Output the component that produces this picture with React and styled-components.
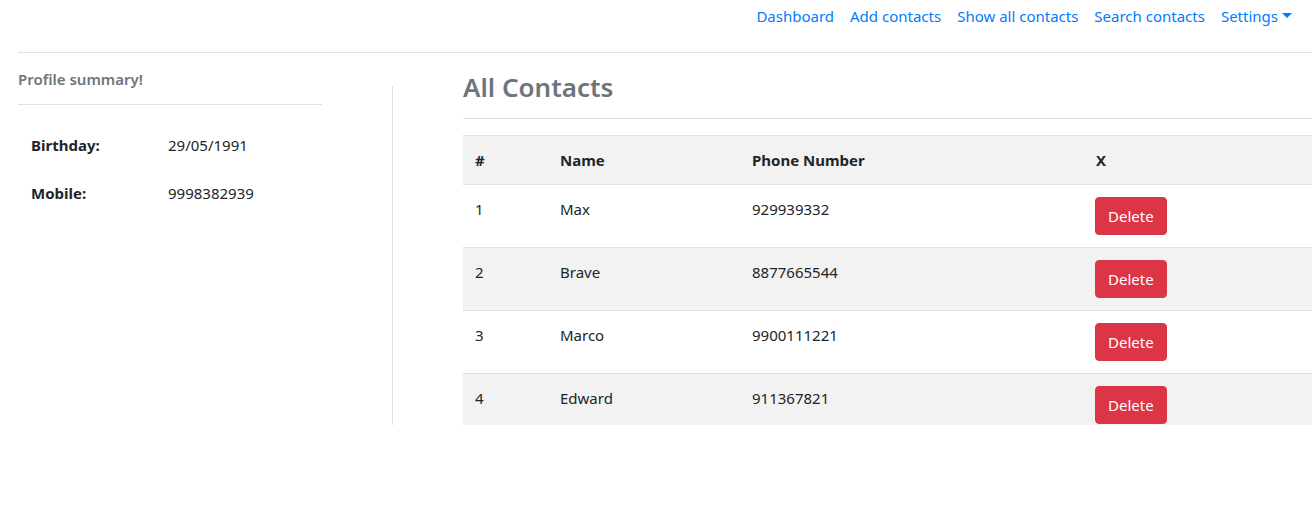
import React from "react";
import styled, { createGlobalStyle } from "styled-components";

const Global = createGlobalStyle`
  html, body { margin: 0; padding: 0; background: #fff; }
  body {
    font-family: "Noto Sans", "Open Sans", sans-serif;
    font-size: 15px;
    line-height: 24px;
    color: #212529;
  }
  * { box-sizing: border-box; }
`;

const Page = styled.div`
  width: 1312px;
  height: 507px;
  overflow: hidden;
  padding-left: 18px;
`;

const Nav = styled.nav`
  display: flex;
  justify-content: flex-end;
  align-items: flex-start;
  height: 53px;
  padding: 4px 12px 0 0;
  border-bottom: 1px solid #dee2e6;
`;

const NavLink = styled.a`
  color: #007bff;
  text-decoration: none;
  padding: 0 8px;
  display: inline-flex;
  align-items: center;
  line-height: 24px;
`;

const Caret = styled.span`
  display: inline-block;
  margin-left: 4px;
  width: 0;
  height: 0;
  border-left: 5px solid transparent;
  border-right: 5px solid transparent;
  border-top: 5px solid #007bff;
  transform: translateY(-1px);
`;

const Main = styled.div`
  display: flex;
  height: 372px;
  overflow: hidden;
`;

const Side = styled.aside`
  width: 374px;
  flex: none;
`;

const SideTitle = styled.div`
  color: #6c757d;
  font-weight: 600;
  font-size: 15px;
  line-height: 24px;
  margin-top: 14px;
`;

const SideRule = styled.div`
  width: 304px;
  border-top: 1px solid #dee2e6;
  margin-top: 13px;
`;

const InfoTable = styled.table`
  border-collapse: collapse;
  margin-top: 16px;
  td {
    padding: 12px 12px 12px 13px;
    vertical-align: top;
    line-height: 24px;
  }
  td:first-child { width: 138px; font-weight: 700; }
  td:last-child { padding-left: 12px; }
`;

const Divider = styled.div`
  width: 1px;
  flex: none;
  margin-top: 33px;
  background: #dee2e6;
`;

const Content = styled.section`
  flex: none;
  width: 900px;
  margin-left: 70px;
`;

const Heading = styled.h2`
  margin: 0;
  padding-top: 16px;
  font-size: 26px;
  line-height: 36px;
  font-weight: 600;
  color: #6c757d;
`;

const Rule = styled.div`
  border-top: 1px solid #dee2e6;
  margin-top: 13px;
`;

const Table = styled.table`
  width: 100%;
  margin-top: 16px;
  border-collapse: collapse;
  th, td {
    padding: 12px;
    text-align: left;
    vertical-align: top;
    line-height: 24px;
    border-top: 1px solid #dee2e6;
  }
  th { font-weight: 700; }
`;

const HeadRow = styled.tr`
  background: #f2f2f2;
`;

const Row = styled.tr`
  background: ${(p) => (p.$striped ? "#f2f2f2" : "#fff")};
`;

const Col = styled.col`
  width: ${(p) => p.$w}px;
`;

const DeleteButton = styled.button`
  display: block;
  height: 38px;
  background: #dc3545;
  border: 1px solid #dc3545;
  color: #fff;
  font-family: inherit;
  font-size: 15px;
  line-height: 24px;
  padding: 6px 12px;
  border-radius: 4px;
  cursor: pointer;
  margin-left: -1px;
`;

const contacts = [
  { id: 1, name: "Max", phone: "929939332" },
  { id: 2, name: "Brave", phone: "8877665544" },
  { id: 3, name: "Marco", phone: "9900111221" },
  { id: 4, name: "Edward", phone: "911367821" },
];

export default function App() {
  return (
    <Page>
      <Global />
      <Nav>
        <NavLink href="#">Dashboard</NavLink>
        <NavLink href="#">Add contacts</NavLink>
        <NavLink href="#">Show all contacts</NavLink>
        <NavLink href="#">Search contacts</NavLink>
        <NavLink href="#">
          Settings
          <Caret />
        </NavLink>
      </Nav>
      <Main>
        <Side>
          <SideTitle>Profile summary!</SideTitle>
          <SideRule />
          <InfoTable>
            <tbody>
              <tr>
                <td>Birthday:</td>
                <td>29/05/1991</td>
              </tr>
              <tr>
                <td>Mobile:</td>
                <td>9998382939</td>
              </tr>
            </tbody>
          </InfoTable>
        </Side>
        <Divider />
        <Content>
          <Heading>All Contacts</Heading>
          <Rule />
          <Table>
            <colgroup>
              <Col $w={85} />
              <Col $w={192} />
              <Col $w={344} />
              <col />
            </colgroup>
            <thead>
              <HeadRow>
                <th>#</th>
                <th>Name</th>
                <th>Phone Number</th>
                <th>X</th>
              </HeadRow>
            </thead>
            <tbody>
              {contacts.map((c, i) => (
                <Row key={c.id} $striped={i % 2 === 1}>
                  <td>{c.id}</td>
                  <td>{c.name}</td>
                  <td>{c.phone}</td>
                  <td>
                    <DeleteButton>Delete</DeleteButton>
                  </td>
                </Row>
              ))}
            </tbody>
          </Table>
        </Content>
      </Main>
    </Page>
  );
}
